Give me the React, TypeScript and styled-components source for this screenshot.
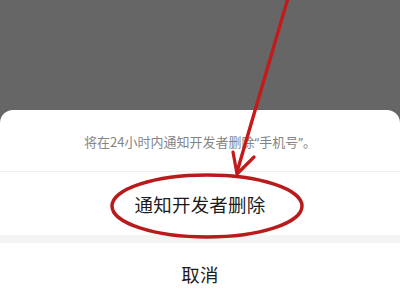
import styled, { createGlobalStyle } from 'styled-components';

const GlobalStyle = createGlobalStyle`
    html, body {
        margin: 0;
        padding: 0;
        background: #ffffff;
    }
    body {
        font-family: "Noto Sans CJK SC", "Noto Sans", sans-serif;
    }
`;

const Screen = styled.div`
    position: relative;
    width: 400px;
    height: 305px;
    display: flex;
    flex-direction: column;
    background: #666666;
    overflow: hidden;
`;

const Backdrop = styled.div`
    height: 110px;
    flex-shrink: 0;
`;

const Sheet = styled.div`
    flex: 1;
    display: flex;
    flex-direction: column;
    background: #ffffff;
    border-radius: 13px 13px 0 0;
`;

const Message = styled.div`
    height: 62px;
    display: flex;
    align-items: center;
    justify-content: center;
    font-size: 13px;
    color: #858585;
    border-bottom: 1px solid #efefef;
    box-sizing: border-box;
    padding-top: 2px;
`;

// the quotes are narrow in the screenshot, not full width
const Quote = styled.span`
    font-family: "Noto Sans", sans-serif;
`;

const Action = styled.div<{ $height: number }>`
    height: ${props => props.$height}px;
    display: flex;
    align-items: center;
    justify-content: center;
    font-size: 18.5px;
    color: #1c1c1c;
    letter-spacing: 0.2px;
`;

const Spacer = styled.div`
    height: 8px;
    background: #f4f4f4;
`;

const Annotation = styled.svg`
    position: absolute;
    left: 0;
    top: 0;
    pointer-events: none;
`;

function App() {
    return (
        <>
            <GlobalStyle />
            <Screen>
                <Backdrop />
                <Sheet>
                    <Message>
                        将在24小时内通知开发者删除<Quote>“</Quote>手机号<Quote>”</Quote>。
                    </Message>
                    <Action $height={63}>通知开发者删除</Action>
                    <Spacer />
                    <Action $height={62}>取消</Action>
                </Sheet>
                {/* red marker drawn over the screenshot */}
                <Annotation width="400" height="305" viewBox="0 0 400 305">
                    <ellipse cx="207" cy="206" rx="95" ry="31" fill="none" stroke="#b81b1b" strokeWidth="3.5" />
                    <line x1="288" y1="-2" x2="237" y2="172" stroke="#c41a1a" strokeWidth="3.4" strokeLinecap="round" />
                    <polyline points="233,152 237,174 254,157" fill="none" stroke="#c41a1a" strokeWidth="3.2" strokeLinecap="round" strokeLinejoin="round" />
                </Annotation>
            </Screen>
        </>
    );
}

export default App;
